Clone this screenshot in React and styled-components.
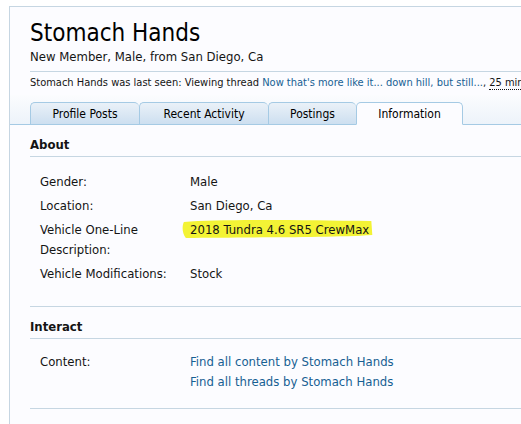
import React from 'react';
import styled, { createGlobalStyle } from 'styled-components';

const GlobalStyle = createGlobalStyle`
  body {
    margin: 0;
    background: #ffffff;
    font-family: Tahoma, "DejaVu Sans Condensed", "DejaVu Sans", sans-serif;
    color: #141414;
  }
`;

const Panel = styled.div`
  margin: 6px 0 0 9px;
  border-left: 1px solid #c6d6e2;
  border-top: 1px solid #c6d6e2;
  background: #fcfcff;
  min-height: 430px;
  overflow: hidden;
`;

const Header = styled.div`
  padding: 0 0 0 20px;
`;

const Title = styled.h1`
  margin: 0;
  padding-top: 11px;
  font-size: 24px;
  font-weight: normal;
  line-height: 30px;
  color: #000;
`;

const Subtitle = styled.div`
  font-size: 13px;
  line-height: 18px;
  padding-bottom: 5px;
  border-bottom: 1px solid #c6d6e2;
`;

const LastSeen = styled.div`
  font-size: 11px;
  line-height: 16px;
  padding: 3px 0 4px;
  white-space: nowrap;
  overflow: hidden;
`;

const Link = styled.a`
  color: #176093;
  text-decoration: none;
`;

const Time = styled.abbr`
  text-decoration: none;
  border-bottom: 1px dotted #141414;
`;

const TabBar = styled.div`
  display: flex;
  align-items: flex-end;
  height: 29px;
  padding-left: 20px;
  background: linear-gradient(to bottom, #fbfcfe, #edf3fa);
  border-bottom: 1px solid #a5cae4;
`;

const Tab = styled.div`
  box-sizing: border-box;
  width: ${(p) => p.w}px;
  height: 23px;
  margin-bottom: -1px;
  display: flex;
  align-items: center;
  justify-content: center;
  font-size: 12px;
  border: 1px solid #a5cae4;
  border-right-width: ${(p) => (p.last ? 1 : 0)}px;
  border-bottom-color: ${(p) => (p.active ? '#fcfcff' : '#a5cae4')};
  border-radius: 5px 5px 0 0;
  background: ${(p) =>
    p.active ? '#fcfcff' : 'linear-gradient(to bottom, #eaf1f8, #cddff0)'};
  color: #000;
`;

const Section = styled.div`
  padding: 0 0 0 20px;
`;

const Heading = styled.h3`
  margin: 0;
  padding: 11px 0 3px;
  font-size: 13px;
  font-weight: bold;
  line-height: 17px;
  border-bottom: 1px solid #c6d6e2;
`;

const Rows = styled.div`
  padding: ${(p) => p.top}px 0 ${(p) => p.bottom}px 10px;
  border-bottom: 1px solid #c6d6e2;
  font-size: 13px;
`;

const Row = styled.div`
  display: flex;
  line-height: 20px;
  margin-bottom: 4px;
`;

const Label = styled.div`
  width: 150px;
  flex: none;
`;

const Value = styled.div`
  display: flex;
  flex-direction: column;
`;

const Marked = styled.span`
  position: relative;
  z-index: 0;
`;

const Marker = styled.svg`
  position: absolute;
  left: -10px;
  top: -3px;
  width: calc(100% + 16px);
  height: 24px;
  z-index: -1;
`;

const Highlight = ({ children }) => (
  <Marked>
    <Marker viewBox="0 0 200 24" preserveAspectRatio="none">
      <path
        d="M4 5 C40 2, 120 3, 196 4 L197 18 C150 21, 60 20, 6 21 C2 16, 2 9, 4 5 Z"
        fill="#f3f335"
      />
    </Marker>
    {children}
  </Marked>
);

const App = () => (
  <>
    <GlobalStyle />
    <Panel>
      <Header>
        <Title>Stomach Hands</Title>
        <Subtitle>New Member, Male, from San Diego, Ca</Subtitle>
        <LastSeen>
          Stomach Hands was last seen: Viewing thread{' '}
          <Link>Now that's more like it... down hill, but still...</Link>,{' '}
          <Time>25 minutes ago</Time>
        </LastSeen>
      </Header>
      <TabBar>
        <Tab w={109}>Profile Posts</Tab>
        <Tab w={129}>Recent Activity</Tab>
        <Tab w={88}>Postings</Tab>
        <Tab w={107} active last>Information</Tab>
      </TabBar>
      <Section>
        <Heading>About</Heading>
        <Rows top={15} bottom={18}>
          <Row><Label>Gender:</Label><Value>Male</Value></Row>
          <Row><Label>Location:</Label><Value>San Diego, Ca</Value></Row>
          <Row>
            <Label>Vehicle One-Line<br />Description:</Label>
            <Value><Highlight>2018 Tundra 4.6 SR5 CrewMax</Highlight></Value>
          </Row>
          <Row><Label>Vehicle Modifications:</Label><Value>Stock</Value></Row>
        </Rows>
        <Heading>Interact</Heading>
        <Rows top={13} bottom={12}>
          <Row>
            <Label>Content:</Label>
            <Value>
              <Link>Find all content by Stomach Hands</Link>
              <Link>Find all threads by Stomach Hands</Link>
            </Value>
          </Row>
        </Rows>
      </Section>
    </Panel>
  </>
);

export default App;
